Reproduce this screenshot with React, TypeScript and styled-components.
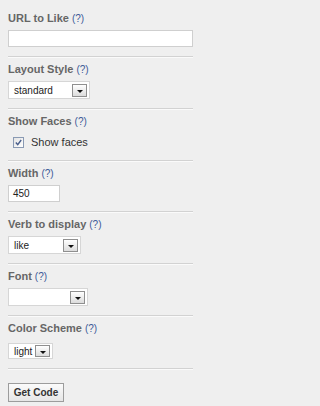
import { FC } from 'react';
import styled, { createGlobalStyle } from 'styled-components';

const GlobalStyle = createGlobalStyle`
	html, body {
		margin: 0;
		padding: 0;
		background: #efefef;
	}
	body {
		font-family: 'Liberation Sans', Arial, sans-serif;
	}
`;

const Panel = styled.form`
	box-sizing: border-box;
	display: flex;
	flex-direction: column;
	align-items: flex-start;
	width: 200px;
	max-width: 200px;
	height: 406px;
	overflow: hidden;
	padding: 6px 7px 0 8px;
`;

const Section = styled.div<{ last?: boolean }>`
	box-sizing: border-box;
	display: flex;
	flex-direction: column;
	align-items: flex-start;
	width: 185px;
	padding: 5px 0 ${({ last }) => (last ? 0 : 9)}px;
	border-bottom: ${({ last }) => (last ? 'none' : '1px solid #d2d2d2')};
	box-shadow: ${({ last }) => (last ? 'none' : '0 1px 0 #fafafa')};
`;

const Label = styled.div`
	height: 14px;
	line-height: 14px;
	font-size: 11px;
	font-weight: bold;
	color: #666666;
	margin-bottom: 5px;
	white-space: nowrap;
`;

const Help = styled.span`
	font-size: 10px;
	font-weight: normal;
	color: #3b5998;
	margin-left: 3px;
`;

const TextInput = styled.div<{ $width: number }>`
	box-sizing: border-box;
	width: ${({ $width }) => $width}px;
	height: 17px;
	background: #ffffff;
	border: 1px solid #cfcfcf;
	font-size: 10px;
	line-height: 15px;
	color: #222222;
	padding: 0 4px;
`;

const Select = styled.div<{ $width: number; $small?: boolean }>`
	box-sizing: border-box;
	display: flex;
	align-items: center;
	justify-content: space-between;
	width: ${({ $width }) => $width}px;
	height: ${({ $small }) => ($small ? 16 : 18)}px;
	margin-top: ${({ $small }) => ($small ? 3 : 0)}px;
	background: #ffffff;
	border: 1px solid #d6d6d6;
	padding: 0 2px 0 5px;
	font-size: 10px;
	color: #222222;
`;

const ArrowButton = styled.span<{ $small?: boolean }>`
	box-sizing: border-box;
	display: flex;
	align-items: center;
	justify-content: center;
	width: 15px;
	height: ${({ $small }) => ($small ? 12 : 13)}px;
	border: 1px solid #8f8f8f;
	background: linear-gradient(#ffffff, #dcdcdc);

	&::after {
		content: '';
		margin-top: 2px;
		border-left: 3px solid transparent;
		border-right: 3px solid transparent;
		border-top: 3px solid #111111;
	}
`;

const CheckRow = styled.label`
	display: flex;
	align-items: center;
	height: 18px;
	margin-left: 5px;
	font-size: 11px;
	color: #333333;
`;

const CheckBox = styled.span`
	box-sizing: border-box;
	display: flex;
	align-items: center;
	justify-content: center;
	width: 11px;
	height: 11px;
	border: 1px solid #8a9ab3;
	background: linear-gradient(135deg, #e4e4e4, #ffffff);
	margin-right: 7px;
`;

const Button = styled.button`
	box-sizing: border-box;
	height: 19px;
	width: 56px;
	margin-top: 9px;
	padding: 0;
	border: 1px solid #9c9c9c;
	border-radius: 0;
	background: linear-gradient(#fbfbfb, #e6e6e6);
	font-family: 'Liberation Sans', Arial, sans-serif;
	font-size: 10px;
	font-weight: bold;
	color: #333333;
`;

const Check = () => (
	<svg width="7" height="7" viewBox="0 0 7 7">
		<path d="M0.8 3.6 L2.7 5.6 L6.2 1" fill="none" stroke="#4a5f8c" strokeWidth="1.4" />
	</svg>
);

type FieldProps = { label: string; children: React.ReactNode };

const Field: FC<FieldProps> = ({ label, children }) => (
	<Section>
		<Label>
			{label}
			<Help>(?)</Help>
		</Label>
		{children}
	</Section>
);

const Dropdown: FC<{ value: string; width: number; small?: boolean }> = ({ value, width, small }) => (
	<Select $width={width} $small={small}>
		<span>{value}</span>
		<ArrowButton $small={small} />
	</Select>
);

const App = () => (
	<>
		<GlobalStyle />
		<Panel>
			<Field label="URL to Like">
				<TextInput $width={185} />
			</Field>
			<Field label="Layout Style">
				<Dropdown value="standard" width={82} />
			</Field>
			<Field label="Show Faces">
				<CheckRow>
					<CheckBox>
						<Check />
					</CheckBox>
					Show faces
				</CheckRow>
			</Field>
			<Field label="Width">
				<TextInput $width={52}>450</TextInput>
			</Field>
			<Field label="Verb to display">
				<Dropdown value="like" width={73} />
			</Field>
			<Field label="Font">
				<Dropdown value="" width={80} />
			</Field>
			<Field label="Color Scheme">
				<Dropdown value="light" width={45} small />
			</Field>
			<Section last>
				<Button type="button">Get Code</Button>
			</Section>
		</Panel>
	</>
);

export default App;
